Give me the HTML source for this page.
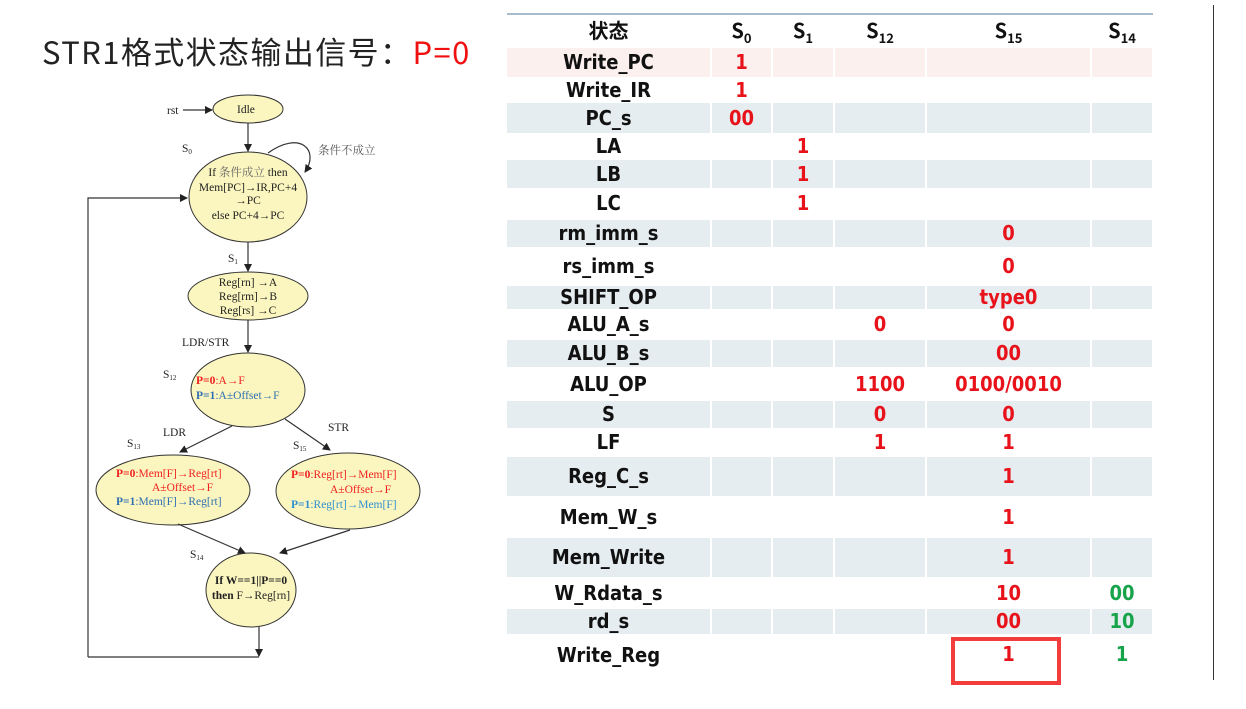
<!DOCTYPE html>
<html><head><meta charset="utf-8"><style>
body{margin:0;width:1246px;height:709px;background:#fff;position:relative;overflow:hidden;font-family:"Liberation Sans","Noto Sans CJK SC",sans-serif}
.t{position:absolute;left:42px;top:28px;font-size:31px;letter-spacing:1.4px;color:#222;font-family:"Noto Sans CJK SC","Liberation Sans",sans-serif}
.lbl,.v{position:absolute;font-weight:bold;font-size:20px;text-align:center;font-family:"DejaVu Sans Condensed","Liberation Sans",sans-serif}
.lbl{left:507px;width:203px;color:#111}
.v{color:#e8121a}
.g{color:#16a34a}
</style></head><body>
<div class="t">STR1格式状态输出信号：<span style="color:#f01010">P=0</span></div>
<div style="position:absolute;left:507px;top:13px;width:646px;height:2px;background:#a8bccb"></div>
<div style="position:absolute;left:1213px;top:5px;width:1px;height:675px;background:#333"></div>
<div id="tbl"></div>
<div style="position:absolute;left:951px;top:637px;width:102px;height:40px;border:4px solid #f33c3c"></div>
<svg style="position:absolute;left:0;top:0" width="500" height="709" font-family="Liberation Serif,Noto Serif CJK SC,serif" font-size="11.5">
<defs><marker id="a" markerWidth="8" markerHeight="8" refX="7" refY="4" orient="auto" markerUnits="userSpaceOnUse"><path d="M0,0L8,4L0,8z" fill="#222"/></marker></defs>
<g fill="#fbf6bf" stroke="#333" stroke-width="1">
<ellipse cx="248" cy="109" rx="35" ry="14"/>
<ellipse cx="248" cy="197" rx="59" ry="45"/>
<ellipse cx="248" cy="296" rx="60" ry="24"/>
<ellipse cx="248" cy="390" rx="57" ry="37"/>
<ellipse cx="173" cy="490" rx="77" ry="35"/>
<ellipse cx="348" cy="491" rx="72" ry="38"/>
<ellipse cx="251" cy="590" rx="45" ry="37"/>
</g>
<g stroke="#333" fill="none" stroke-width="1.2" marker-end="url(#a)">
<line x1="183" y1="110" x2="212" y2="110"/>
<line x1="248" y1="123" x2="248" y2="151"/>
<path d="M268,153 C300,130 320,150 305,172"/>
<polyline points="88,657 88,198 187,198"/>
<line x1="248" y1="242" x2="248" y2="271"/>
<line x1="248" y1="320" x2="248" y2="352"/>
<line x1="232" y1="426" x2="180" y2="452"/>
<line x1="285" y1="419" x2="330" y2="450"/>
<line x1="178" y1="524" x2="245" y2="553"/>
<line x1="350" y1="530" x2="280" y2="553"/>
<polyline points="88,657 259,657" marker-end="none"/>
<line x1="259" y1="627" x2="259" y2="656"/>
</g>
<g fill="#222">
<text x="167" y="114">rst</text><text x="237" y="113">Idle</text>
<text x="182" y="152">S<tspan font-size="7" dy="2">0</tspan></text>
<text x="318" y="154" fill="#555">条件不成立</text>
<text x="248" y="176" text-anchor="middle">If <tspan fill="#666">条件成立</tspan> then</text>
<text x="248" y="191" text-anchor="middle">Mem[PC]→IR,PC+4</text>
<text x="248" y="204" text-anchor="middle">→PC</text>
<text x="248" y="219" text-anchor="middle">else PC+4→PC</text>
<text x="228" y="262">S<tspan font-size="7" dy="2">1</tspan></text>
<text x="248" y="286" text-anchor="middle">Reg[rn] →A</text>
<text x="248" y="300" text-anchor="middle">Reg[rm]→B</text>
<text x="248" y="314" text-anchor="middle">Reg[rs] →C</text>
<text x="182" y="346">LDR/STR</text>
<text x="163" y="378">S<tspan font-size="7" dy="2">12</tspan></text>
<text x="196" y="384" fill="#f02020"><tspan font-weight="bold">P=0</tspan>:A→F</text>
<text x="196" y="399" fill="#2f6fb3"><tspan font-weight="bold">P=1</tspan>:A±Offset→F</text>
<text x="163" y="436">LDR</text><text x="328" y="431">STR</text>
<text x="127" y="447">S<tspan font-size="7" dy="2">13</tspan></text>
<text x="293" y="449">S<tspan font-size="7" dy="2">15</tspan></text>
<text x="116" y="477" fill="#f02020"><tspan font-weight="bold">P=0</tspan>:Mem[F]→Reg[rt]</text>
<text x="152" y="491" fill="#f02020">A±Offset→F</text>
<text x="116" y="505" fill="#2f6fb3"><tspan font-weight="bold">P=1</tspan>:Mem[F]→Reg[rt]</text>
<text x="291" y="478" fill="#f02020"><tspan font-weight="bold">P=0</tspan>:Reg[rt]→Mem[F]</text>
<text x="330" y="493" fill="#f02020">A±Offset→F</text>
<text x="291" y="508" fill="#2f8fd0"><tspan font-weight="bold">P=1</tspan>:Reg[rt]→Mem[F]</text>
<text x="190" y="558">S<tspan font-size="7" dy="2">14</tspan></text>
<text x="251" y="584" text-anchor="middle" font-weight="bold">If W==1||P==0</text>
<text x="251" y="599" text-anchor="middle"><tspan font-weight="bold">then</tspan> F→Reg[rn]</text>
</g>
</svg>
<script>
var cols=[[507,710],[712,771],[773,833],[835,925],[927,1090],[1092,1152]];
var rows=[
["Write_PC",48,77,"p",["1","","","",""]],
["Write_IR",77,103,"",["1","","","",""]],
["PC_s",103,133,"g",["00","","","",""]],
["LA",133,160,"",["","1","","",""]],
["LB",160,188,"g",["","1","","",""]],
["LC",188,218,"",["","1","","",""]],
["rm_imm_s",220,247,"g",["","","","0",""]],
["rs_imm_s",247,286,"",["","","","0",""]],
["SHIFT_OP",286,309,"g",["","","","type0",""]],
["ALU_A_s",309,340,"",["","","0","0",""]],
["ALU_B_s",340,367,"g",["","","","00",""]],
["ALU_OP",367,401,"",["","","1100","0100/0010",""]],
["S",401,428,"g",["","","0","0",""]],
["LF",428,456,"",["","","1","1",""]],
["Reg_C_s",457,496,"g",["","","","1",""]],
["Mem_W_s",496,538,"",["","","","1",""]],
["Mem_Write",538,577,"g",["","","","1",""]],
["W_Rdata_s",577,609,"",["","","","10","00"]],
["rd_s",609,634,"g",["","","","00","10"]],
["Write_Reg",634,676,"",["","","","1","1"]]];
var h="";
var hd=["状态","S<sub>0</sub>","S<sub>1</sub>","S<sub>12</sub>","S<sub>15</sub>","S<sub>14</sub>"];
for(var i=0;i<6;i++)h+='<div class="lbl" style="left:'+cols[i][0]+'px;width:'+(cols[i][1]-cols[i][0])+'px;top:16px;line-height:28px;font-family:\'Noto Sans CJK SC\',sans-serif">'+hd[i].replace(/<sub>/,'<sub style="font-size:13px">')+'</div>';
rows.forEach(function(r){
 var bg=r[3]=="g"?"#e6edf1":r[3]=="p"?"#fbf0ed":"";
 if(bg)cols.forEach(function(c){h+='<div style="position:absolute;left:'+c[0]+'px;width:'+(c[1]-c[0])+'px;top:'+r[1]+'px;height:'+(r[2]-r[1])+'px;background:'+bg+'"></div>';});
 var lh=r[2]-r[1];
 h+='<div class="lbl" style="top:'+r[1]+'px;line-height:'+lh+'px">'+r[0]+'</div>';
 r[4].forEach(function(v,j){if(!v)return;var c=cols[j+1];var top=r[1],l=lh;if(r[0]=="Write_Reg"){l=40;}
 h+='<div class="v'+(j==4?' g':'')+'" style="left:'+c[0]+'px;width:'+(c[1]-c[0])+'px;top:'+top+'px;line-height:'+l+'px">'+v+'</div>';});
});
document.getElementById("tbl").innerHTML=h;
</script>
</body></html>
